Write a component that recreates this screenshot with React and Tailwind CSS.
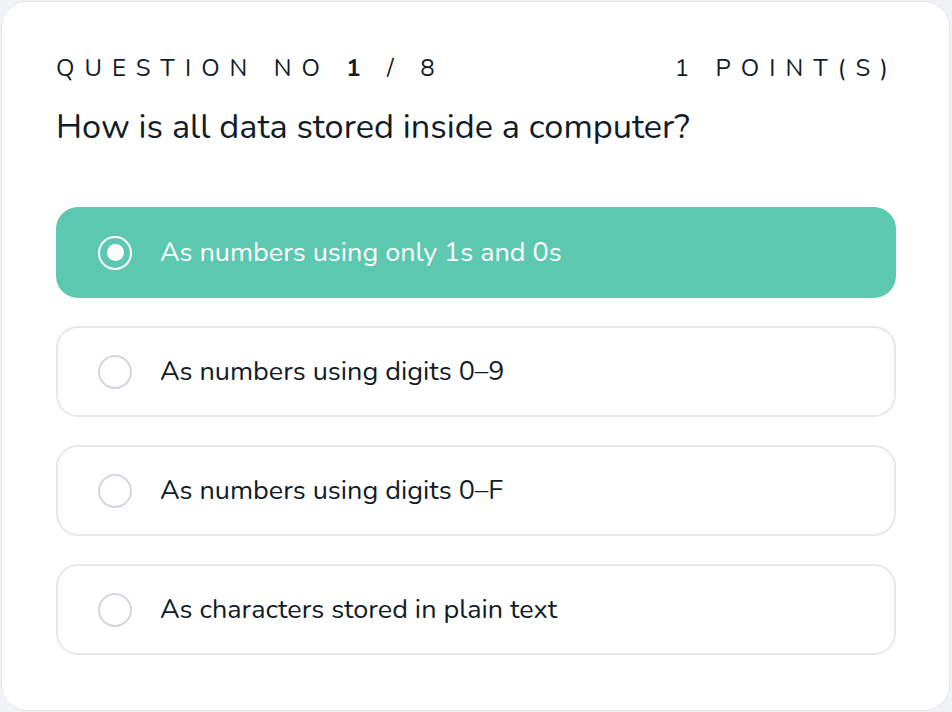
import React from "react";

const options = [
  "As numbers using only 1s and 0s",
  "As numbers using digits 0–9",
  "As numbers using digits 0–F",
  "As characters stored in plain text",
];

export default function App() {
  const selected = 0;
  return (
    <div
      className="min-h-screen bg-[#f1f2f5] p-px"
      style={{ fontFamily: "Nunito, Lato, 'Open Sans', sans-serif" }}
    >
      <div className="h-[710px] w-[949px] rounded-[26px] border border-[#e6e7eb] bg-white pl-[54px] pr-[53px] pt-[52px]">
        <div className="flex items-center justify-between text-[24px] leading-[28px] tracking-[0.42em] text-[#121c28]">
          <div>
            QUESTION NO <span className="font-bold">1</span> / 8
          </div>
          <div className="-mr-[2px]">1 POINT(S)</div>
        </div>
        <h1 className="mt-[24px] text-[34.3px] leading-[42px] text-[#121c28]">
          How is all data stored inside a computer?
        </h1>
        <div className="mt-[59px] flex flex-col gap-[28px]">
          {options.map((o, i) => {
            const sel = i === selected;
            return (
              <div
                key={i}
                className={
                  sel
                    ? "flex h-[91px] items-center rounded-[22px] bg-[#5cc8b0] pl-[42px] text-white"
                    : "flex h-[91px] items-center rounded-[22px] border-2 border-[#e6e7eb] bg-white pl-[40px] text-[#121c28]"
                }
              >
                {sel ? (
                  <span className="flex h-[34px] w-[34px] items-center justify-center rounded-full border-2 border-white">
                    <span className="h-[17px] w-[17px] rounded-full bg-white" />
                  </span>
                ) : (
                  <span className="h-[34px] w-[34px] rounded-full border-2 border-[#d3d6dc]" />
                )}
                <span className="ml-[28px] text-[27px] leading-[34px]">{o}</span>
              </div>
            );
          })}
        </div>
      </div>
    </div>
  );
}
